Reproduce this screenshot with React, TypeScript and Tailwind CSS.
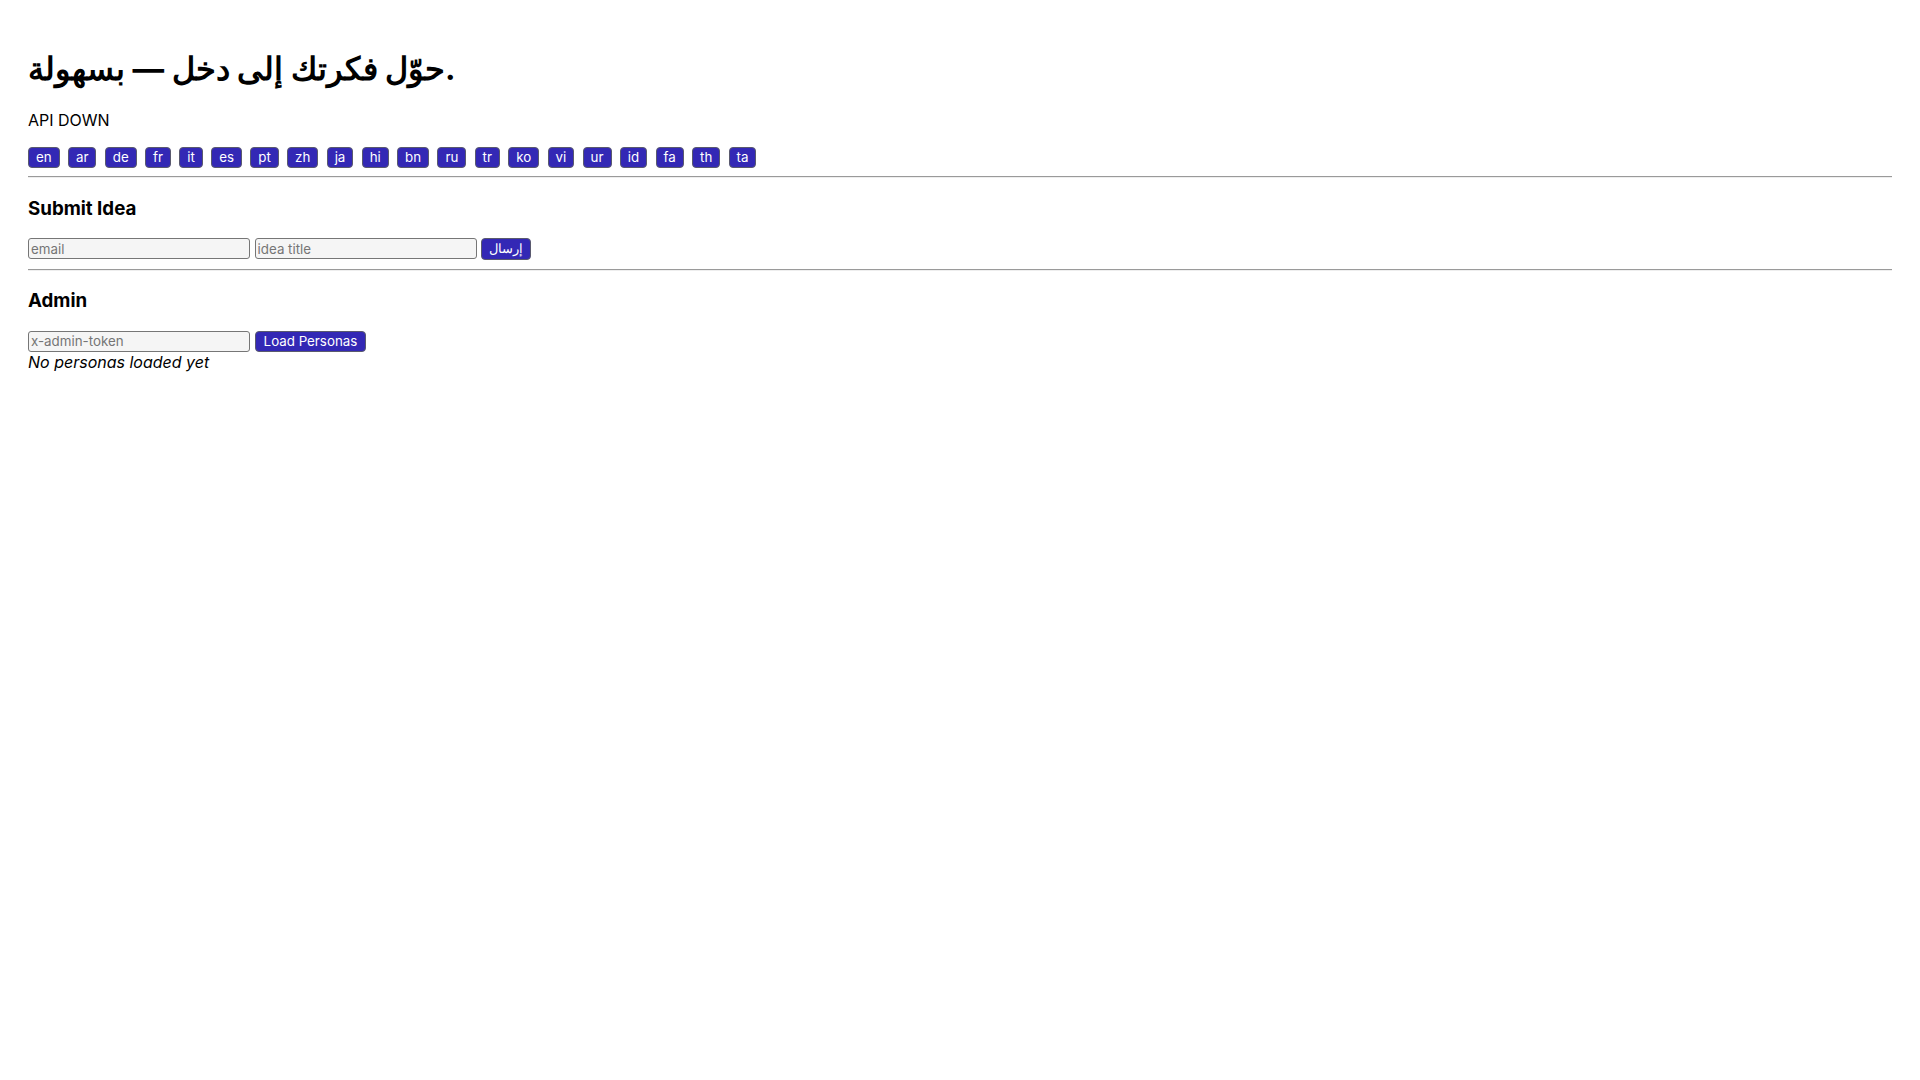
import React from "react";

const langs = ["en","ar","de","fr","it","es","pt","zh","ja","hi","bn","ru","tr","ko","vi","ur","id","fa","th","ta"];

const btn = "h-[21px] px-[7px] flex items-center justify-center rounded-[4px] border border-[#5a5a6e] bg-[#3328b5] text-white text-[13.333px] leading-none font-['Inter',sans-serif]";
const inp = "w-[222px] h-[21px] px-[2px] rounded-[3px] border border-[#767676] bg-[#f5f5f5] text-[13.333px] text-black placeholder:text-[#757575] font-['Inter',sans-serif] outline-none";

function Rule() {
  return <div className="h-0 border-t border-b border-t-[#9a9a9a] border-b-[#eeeeee]" />;
}

export default function App() {
  return (
    <div className="min-h-screen bg-white px-[28px] text-black font-['Inter',sans-serif]">
      <h1 className="pt-[49px] text-[31.6px] font-bold leading-[39px]">حوّل فكرتك إلى دخل — بسهولة.</h1>
      <p className="mt-[23px] text-[16px] leading-[19px]">API DOWN</p>
      <div className="mt-[17px] flex flex-wrap gap-[8.3px]">
        {langs.map((l) => (
          <button key={l} className={btn}>{l}</button>
        ))}
      </div>
      <div className="mt-[8px]"><Rule /></div>
      <h2 className="mt-[18.5px] text-[18.72px] font-bold leading-[24px]">Submit Idea</h2>
      <div className="mt-[17px] flex items-center gap-[4.6px]">
        <input className={inp} placeholder="email" />
        <input className={inp} placeholder="idea title" />
        <button className={btn + " h-[22px]"}>إرسال</button>
      </div>
      <div className="mt-[9px]"><Rule /></div>
      <h2 className="mt-[18.7px] text-[18.72px] font-bold leading-[24px]">Admin</h2>
      <div className="mt-[17.5px] flex items-center gap-[4.6px]">
        <input className={inp} placeholder="x-admin-token" />
        <button className={btn + " px-[8px]"}>Load Personas</button>
      </div>
      <p className="mt-[1.5px] text-[16px] italic leading-[19px]">No personas loaded yet</p>
    </div>
  );
}
